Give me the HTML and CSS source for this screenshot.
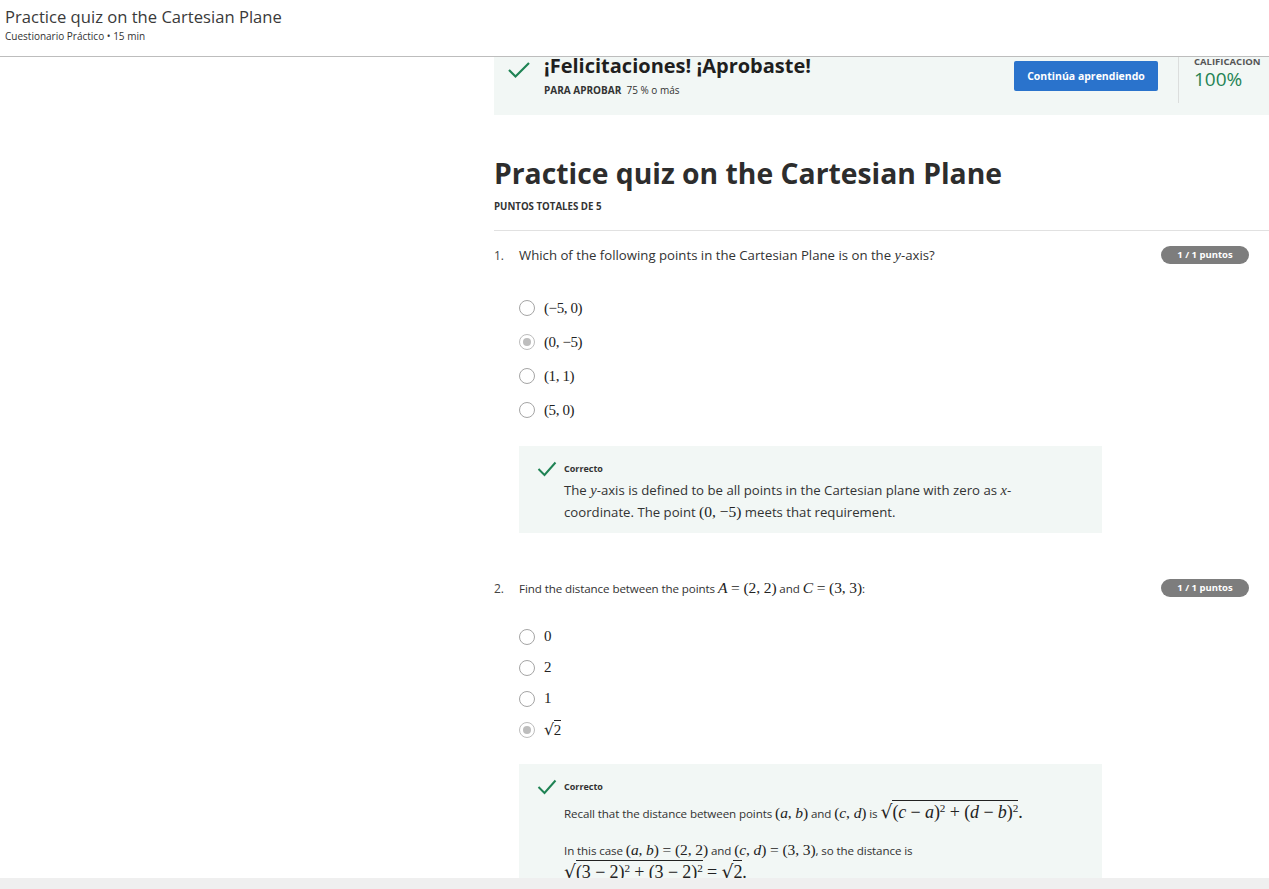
FILE: index.html
```html
<!DOCTYPE html>
<html lang="es">
<head>
<meta charset="utf-8">
<title>Practice quiz on the Cartesian Plane</title>
<link rel="stylesheet" href="styles.css">
</head>
<body>
<header class="top">
  <div class="top-title">Practice quiz on the Cartesian Plane</div>
  <div class="top-sub">Cuestionario Práctico • 15 min</div>
</header>
<div class="layout">
  <aside class="side"></aside>
  <main class="main">
    <section class="banner">
      <svg class="banner-check" viewBox="0 0 24 18" width="24" height="18"><polyline points="2,9 8.5,15.5 22,2" fill="none" stroke="#1f8354" stroke-width="2.2"/></svg>
      <div class="banner-text">
        <div class="banner-head">¡Felicitaciones! ¡Aprobaste!</div>
        <div class="banner-pass"><b>PARA APROBAR</b>&nbsp; 75 % o más</div>
      </div>
      <button class="btn">Continúa aprendiendo</button>
      <div class="grade">
        <div class="grade-label">CALIFICACION</div>
        <div class="grade-value">100%</div>
      </div>
    </section>

    <h1 class="quiz-title">Practice quiz on the Cartesian Plane</h1>
    <div class="total">PUNTOS TOTALES DE 5</div>

    <section class="question q1">
      <div class="q-head">
        <span class="q-num">1.</span>
        <span class="q-text">Which of the following points in the Cartesian Plane is on the <i class="m">y</i>-axis?</span>
        <span class="badge">1 / 1 puntos</span>
      </div>
      <ul class="options">
        <li class="opt"><span class="radio"></span><span class="mt">(−5, 0)</span></li>
        <li class="opt"><span class="radio checked"></span><span class="mt">(0, −5)</span></li>
        <li class="opt"><span class="radio"></span><span class="mt">(1, 1)</span></li>
        <li class="opt"><span class="radio"></span><span class="mt">(5, 0)</span></li>
      </ul>
      <div class="feedback">
        <svg class="fb-check" viewBox="0 0 20 16" width="20" height="16"><polyline points="1.5,8 7.5,14 18.5,1.5" fill="none" stroke="#1f8354" stroke-width="2"/></svg>
        <div class="fb-body">
          <div class="fb-label">Correcto</div>
          <p class="fb-text">The <i class="m">y</i>-axis is defined to be all points in the Cartesian plane with zero as <i class="m">x</i>-<br>coordinate. The point <span class="mt">(0, −5)</span> meets that requirement.</p>
        </div>
      </div>
    </section>

    <section class="question q2">
      <div class="q-head">
        <span class="q-num">2.</span>
        <span class="q-text small">Find the distance between the points <span class="mt"><i>A</i> = (2, 2)</span> and <span class="mt"><i>C</i> = (3, 3)</span>:</span>
        <span class="badge">1 / 1 puntos</span>
      </div>
      <ul class="options tight">
        <li class="opt"><span class="radio"></span><span class="mt">0</span></li>
        <li class="opt"><span class="radio"></span><span class="mt">2</span></li>
        <li class="opt"><span class="radio"></span><span class="mt">1</span></li>
        <li class="opt"><span class="radio checked"></span><span class="mt"><span class="sq">√</span><span class="rad">2</span></span></li>
      </ul>
      <div class="feedback">
        <svg class="fb-check" viewBox="0 0 20 16" width="20" height="16"><polyline points="1.5,8 7.5,14 18.5,1.5" fill="none" stroke="#1f8354" stroke-width="2"/></svg>
        <div class="fb-body">
          <div class="fb-label">Correcto</div>
          <p class="fb-text small first">Recall that the distance between points <span class="mt">(<i>a</i>, <i>b</i>)</span> and <span class="mt">(<i>c</i>, <i>d</i>)</span> is <span class="mt big"><span class="sq">√</span><span class="rad">(<i>c</i> − <i>a</i>)<sup>2</sup> + (<i>d</i> − <i>b</i>)<sup>2</sup></span>.</span></p>
          <p class="fb-text small">In this case <span class="mt">(<i>a</i>, <i>b</i>) = (2, 2)</span> and <span class="mt">(<i>c</i>, <i>d</i>) = (3, 3)</span>, so the distance is<br><span class="mt big"><span class="sq">√</span><span class="rad">(3 − 2)<sup>2</sup> + (3 − 2)<sup>2</sup></span> = <span class="sq">√</span><span class="rad">2</span>.</span></p>
        </div>
      </div>
    </section>
  </main>
</div>
<div class="bottom-bar"></div>
</body>
</html>
```

FILE: styles.css
```css
html, body {
  margin: 0;
  padding: 0;
  background: #fff;
  font-family: "Open Sans", "Liberation Sans", sans-serif;
  color: #333;
  overflow: hidden;
}

.top {
  height: 56px;
  border-bottom: 1px solid #bdbdbd;
  padding-left: 5px;
  box-sizing: content-box;
}
.top-title {
  font-size: 16.6px;
  line-height: 22px;
  padding-top: 6px;
  color: #3a3a3a;
}
.top-sub {
  font-size: 10px;
  line-height: 14px;
  padding-top: 1px;
  color: #333;
}

.layout {
  display: flex;
}
.side {
  flex: 0 0 494px;
}
.main {
  flex: 0 0 775px;
  width: 775px;
  overflow: hidden;
}

/* banner */
.banner {
  display: flex;
  align-items: flex-start;
  background: #f2f7f5;
  height: 58px;
  width: 800px;
  padding-left: 13px;
  box-sizing: border-box;
}
.banner-check {
  margin-top: 4px;
  flex: none;
}
.banner-text {
  margin-left: 13px;
  width: 470px;
}
.banner-head {
  font-size: 20px;
  font-weight: 700;
  line-height: 22px;
  margin-top: -2px;
  color: #1f1f1f;
}
.banner-pass {
  font-size: 10px;
  margin-top: 6px;
  color: #333;
}
.banner-pass b {
  font-weight: 700;
}
.btn {
  margin-top: 4px;
  width: 144px;
  height: 30px;
  border: none;
  border-radius: 2px;
  background: #2a73cc;
  color: #fff;
  font-family: "Open Sans", "Liberation Sans", sans-serif;
  font-size: 10.5px;
  font-weight: 700;
  padding: 0;
  flex: none;
}
.grade {
  margin-left: 20px;
  border-left: 1px solid #dcdedd;
  height: 46px;
  padding-left: 15px;
  flex: none;
}
.grade-label {
  font-size: 9.5px;
  font-weight: 700;
  color: #555;
  line-height: 12px;
  margin-top: -1px;
}
.grade-value {
  font-size: 19px;
  line-height: 22px;
  color: #1f8354;
}

.quiz-title {
  margin: 40px 0 0;
  font-size: 28.3px;
  line-height: 36px;
  font-weight: 700;
  color: #2d2d2d;
}
.total {
  margin-top: 10px;
  font-size: 9.7px;
  line-height: 12px;
  font-weight: 700;
  color: #333;
  padding-bottom: 17px;
  border-bottom: 1px solid #e1e1e1;
}

.question {
  padding-top: 14px;
}
.q-head {
  display: flex;
  align-items: center;
  height: 20px;
}
.q-num {
  width: 25px;
  font-size: 12px;
  color: #444;
}
.q-text {
  flex: 1;
  font-size: 13.2px;
  color: #333;
}
.q-text.small {
  font-size: 11.6px;
  letter-spacing: -0.1px;
}
.badge {
  margin-right: 20px;
  width: 88px;
  height: 18px;
  border-radius: 9px;
  background: #7d7d7d;
  color: #fff;
  font-size: 9.5px;
  font-weight: 700;
  line-height: 18px;
  text-align: center;
  flex: none;
}

.options {
  list-style: none;
  margin: 26px 0 0 25px;
  padding: 0;
}
.opt {
  display: flex;
  align-items: center;
  height: 34px;
}
.options.tight {
  margin-top: 23px;
}
.options.tight .opt {
  height: 31px;
}
.radio {
  width: 16px;
  height: 16px;
  box-sizing: border-box;
  border: 1.5px solid #a5a5a5;
  border-radius: 50%;
  margin-right: 9px;
  display: flex;
  align-items: center;
  justify-content: center;
  flex: none;
}
.radio.checked {
  border-color: #bdbdbd;
}
.radio.checked::after {
  content: "";
  width: 8px;
  height: 8px;
  border-radius: 50%;
  background: #bdbdbd;
}

.m, .mt {
  font-family: "Liberation Serif", "DejaVu Serif", serif;
}
.m {
  font-style: italic;
  font-size: 1.1em;
}
.mt {
  font-size: 15px;
  color: #222;
  white-space: nowrap;
}
.opt .mt {
  letter-spacing: -0.4px;
}
.mt i {
  font-style: italic;
}
.fb-text .mt, .q-text .mt {
  font-size: 15.5px;
}
.fb-text .mt.big {
  font-size: 18px;
}
.mt sup {
  font-size: 0.62em;
  vertical-align: 0.55em;
  line-height: 0;
}
.sq {
  font-family: "DejaVu Serif", serif;
  font-size: 1.05em;
}
.rad {
  border-top: 1px solid #222;
  padding-top: 1px;
}

.feedback {
  display: flex;
  margin-top: 19px;
  margin-left: 25px;
  width: 583px;
  background: #f2f7f5;
  padding: 16px 0 10px 18px;
  box-sizing: border-box;
}
.fb-check {
  flex: none;
  margin-right: 7px;
  margin-top: -1px;
}
.fb-label {
  font-size: 9px;
  font-weight: 700;
  line-height: 14px;
  color: #333;
}
.fb-text {
  margin: 4px 0 0;
  font-size: 13.2px;
  line-height: 21px;
  color: #333;
}
.fb-text.small {
  font-size: 11.6px;
  letter-spacing: -0.1px;
}
.fb-text.first {
  margin-top: 4px;
  margin-bottom: 12px;
  line-height: 26px;
}

.q2 {
  padding-top: 45px;
}
.q2 .feedback {
  margin-top: 19px;
}

.bottom-bar {
  position: fixed;
  left: 0;
  right: 0;
  bottom: 0;
  height: 11px;
  background: #efefef;
}
```
